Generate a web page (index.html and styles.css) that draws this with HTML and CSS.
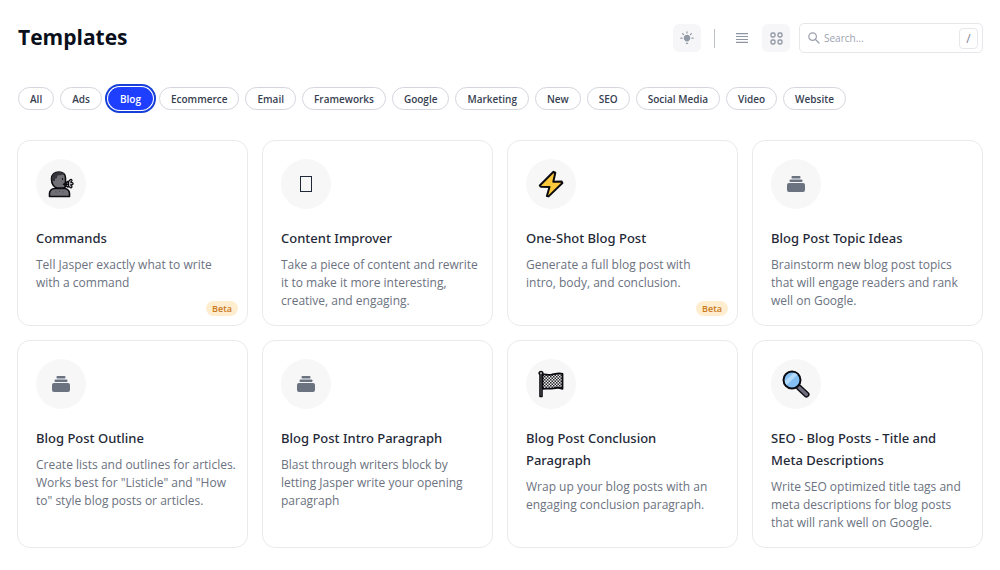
FILE: index.html
```html
<!DOCTYPE html>
<html lang="en">
<head>
<meta charset="utf-8">
<meta name="viewport" content="width=device-width, initial-scale=1">
<title>Templates</title>
<link rel="stylesheet" href="styles.css">
</head>
<body>
<svg class="defs" width="0" height="0" aria-hidden="true">
  <defs>
    <symbol id="stack" viewBox="0 0 18 16">
      <rect x="4.500" y="0" width="9" height="2.400" rx="1"/>
      <rect x="2.500" y="3.500" width="13" height="2.400" rx="1"/>
      <rect x="0" y="7" width="18" height="9" rx="2"/>
    </symbol>
  </defs>
</svg>
<main class="page">
  <header class="topbar">
    <h1 class="title">Templates</h1>
    <div class="tools">
      <button class="tool tool-active" type="button" aria-label="Suggestions">
        <svg width="14" height="14" viewBox="0 0 14 14" fill="none" stroke="#9299a6" stroke-width="1.200" stroke-linecap="round">
          <path d="M7 .8v1.200M2.600 2.600l.9.9M11.400 2.600l-.9.900M.8 7.200H2M12 7.200h1.200"/>
          <path d="M7 4.400a2.700 2.700 0 0 0-1.600 4.900l.8.700h1.600l.8-.7A2.700 2.700 0 0 0 7 4.400zM6.400 12.400h1.200" fill="#9299a6"/>
        </svg>
      </button>
      <span class="divider"></span>
      <button class="tool" type="button" aria-label="List view">
        <svg width="12" height="10" viewBox="0 0 12 10" stroke="#8f96a3" stroke-width="1.200"><path d="M0 .6h12M0 3.500h12M0 6.500h12M0 9.400h12"/></svg>
      </button>
      <button class="tool tool-active tool-grid" type="button" aria-label="Grid view">
        <svg width="13" height="13" viewBox="0 0 13 13" fill="none" stroke="#9299a6" stroke-width="1.400"><rect x="1" y="1" width="4" height="4" rx="1.400"/><rect x="8" y="1" width="4" height="4" rx="1.400"/><rect x="1" y="8" width="4" height="4" rx="1.400"/><rect x="8" y="8" width="4" height="4" rx="1.400"/></svg>
      </button>
      <label class="search">
        <svg width="12" height="12" viewBox="0 0 12 12" fill="none" stroke="#9aa0ac" stroke-width="1.200" stroke-linecap="round"><circle cx="4.600" cy="4.600" r="3.800"/><path d="M7.500 7.500l3.500 3.500"/></svg>
        <input class="search-input" type="text" placeholder="Search..." aria-label="Search">
        <kbd class="key">/</kbd>
      </label>
    </div>
  </header>

  <nav class="filters" aria-label="Categories">
    <button class="chip" type="button">All</button>
    <button class="chip" type="button">Ads</button>
    <button class="chip chip-active" type="button" aria-pressed="true">Blog</button>
    <button class="chip" type="button">Ecommerce</button>
    <button class="chip" type="button">Email</button>
    <button class="chip" type="button">Frameworks</button>
    <button class="chip" type="button">Google</button>
    <button class="chip" type="button">Marketing</button>
    <button class="chip" type="button">New</button>
    <button class="chip" type="button">SEO</button>
    <button class="chip" type="button">Social Media</button>
    <button class="chip" type="button">Video</button>
    <button class="chip" type="button">Website</button>
  </nav>

  <section class="grid">
    <article class="card">
      <div class="icon">
        <svg width="26" height="28" viewBox="0 0 26 28" stroke="#0b0b10" stroke-width="1.600" stroke-linejoin="round" stroke-linecap="round">
          <path d="M1.500 26.500v-3a5 5 0 0 1 5-5h10a5 5 0 0 1 5 5v3z" fill="#717076"/>
          <path d="M3.500 9c0-4.500 3-7 7.500-7 4 0 6.500 2.500 6.500 6v7.500c0 1.800-1 2.500-2.500 2.500H10C6 18 3.500 14 3.500 9z" fill="#717076"/>
          <path d="M4 12C2.800 6 5.500 2 11 2c3 0 4.800.8 5.800 2.500L9.500 5.500l-.7 2.800-1.800.5v2.200H5.500z" fill="#36353b" stroke="none"/>
          <path d="M17 13.500l3-2M15.500 14.300H20M17 15.300l3 1.700" fill="none"/>
          <path d="M20.500 11.500l2-2c1-.6 2 .8 1.200 1.700l-1 1 1.600.4c1.200.4 1 1.900 0 2l-1.600.2 1 1.200c.8 1-.2 2.300-1.200 1.800l-2-1.500z" fill="#c4c4c8" stroke-width="1.200"/>
          <path d="M14.500 8.500v.8" fill="none" stroke-width="1.200"/>
          <path d="M8 22h.1M11.500 21.500h.1M15 22h.1" fill="none" stroke="#45444a" stroke-width="1"/>
        </svg>
      </div>
      <h2 class="name">Commands</h2>
      <p class="desc">Tell Jasper exactly what to write with a command</p>
      <span class="badge">Beta</span>
    </article>
    <article class="card">
      <div class="icon"><span class="glyph"></span></div>
      <h2 class="name">Content Improver</h2>
      <p class="desc">Take a piece of content and rewrite it to make it more interesting, creative, and engaging.</p>
    </article>
    <article class="card">
      <div class="icon">
        <svg width="26" height="28" viewBox="0 0 26 28"><path d="M15.500 1.800L1.800 15.500l1 1.200 8.700.3-2.600 9 1.700.4L24.400 13l-.8-1.500-8.300.2 2-9z" fill="#fdc93c" stroke="#0b0b10" stroke-width="2" stroke-linejoin="round"/></svg>
      </div>
      <h2 class="name">One-Shot Blog Post</h2>
      <p class="desc">Generate a full blog post with<br>intro, body, and conclusion.</p>
      <span class="badge">Beta</span>
    </article>
    <article class="card">
      <div class="icon"><svg class="stack" width="18" height="16"><use href="#stack"/></svg></div>
      <h2 class="name">Blog Post Topic Ideas</h2>
      <p class="desc">Brainstorm new blog post topics that will engage readers and rank well on Google.</p>
    </article>
    <article class="card">
      <div class="icon"><svg class="stack" width="18" height="16"><use href="#stack"/></svg></div>
      <h2 class="name">Blog Post Outline</h2>
      <p class="desc">Create lists and outlines for articles. Works best for "Listicle" and "How to" style blog posts or articles.</p>
    </article>
    <article class="card">
      <div class="icon"><svg class="stack" width="18" height="16"><use href="#stack"/></svg></div>
      <h2 class="name">Blog Post Intro Paragraph</h2>
      <p class="desc">Blast through writers block by letting Jasper write your opening paragraph</p>
    </article>
    <article class="card">
      <div class="icon">
        <svg width="26" height="28" viewBox="0 0 26 28">
          <defs><pattern id="checks" width="3" height="3" patternUnits="userSpaceOnUse"><rect width="3" height="3" fill="#eee"/><path d="M0 0h1.500v1.500H0zM1.500 1.500H3V3H1.500z" fill="#26262c"/></pattern></defs>
          <path d="M4.500 4.500c3-.8 5 .8 9 .2 4-.8 7-2.200 11-.9v15c-3-1.300-6-1.300-9-.5-4 .8-7 0-11 .5z" fill="url(#checks)" stroke="#0b0b10" stroke-width="1.800" stroke-linejoin="round"/>
          <path d="M2 26.500V4.500c-1.500-1-1-3 1-3s2.500 2 1 3v22z" fill="#d0d0d4" stroke="#0b0b10" stroke-width="1.600" stroke-linejoin="round"/>
        </svg>
      </div>
      <h2 class="name">Blog Post Conclusion Paragraph</h2>
      <p class="desc">Wrap up your blog posts with an engaging conclusion paragraph.</p>
    </article>
    <article class="card">
      <div class="icon">
        <svg width="28" height="28" viewBox="0 0 28 28" stroke-linecap="round">
          <path d="M17 17.500l7.500 7" stroke="#0b0b10" stroke-width="6"/>
          <path d="M17 17.500l7.500 7" stroke="#6f6f80" stroke-width="3.200"/>
          <circle cx="10" cy="10" r="8.500" fill="#84bff4" stroke="#0b0b10" stroke-width="2"/>
          <path d="M2.800 11L12 2.800a7.500 7.500 0 0 1 3.500 2L4.500 15a7.500 7.500 0 0 1-1.700-4z" fill="#b3daf9"/>
        </svg>
      </div>
      <h2 class="name">SEO - Blog Posts - Title and Meta Descriptions</h2>
      <p class="desc">Write SEO optimized title tags and meta descriptions for blog posts that will rank well on Google.</p>
    </article>
  </section>
</main>
</body>
</html>
```
FILE: styles.css
```css
* { box-sizing: border-box; }
body {
  margin: 0;
  background: #fff;
  color: #1f2937;
  font-family: "Open Sans", "Noto Sans", sans-serif;
}
button, input, kbd { font-family: inherit; }
.defs { position: absolute; }
.page { padding: 22px 17px; }
.topbar {
  display: flex;
  align-items: flex-start;
  justify-content: space-between;
  padding-left: 1px;
}
.title {
  margin: 0;
  color: #0a0f1c;
  font-size: 21px;
  line-height: 30px;
  font-weight: 700;
}
.tools {
  display: flex;
  align-items: center;
  height: 32px;
}
.tool {
  display: grid;
  place-items: center;
  width: 28px;
  height: 28px;
  padding: 0;
  border: 0;
  border-radius: 6px;
  background: transparent;
}
.tool-active { background: #f6f6f8; }
.tool-grid { margin: 0 9px 0 6px; }
.divider {
  width: 1px;
  height: 19px;
  margin: 0 13px;
  background: #bcc0c8;
}
.search {
  display: flex;
  align-items: center;
  gap: 4px;
  width: 184px;
  height: 30px;
  padding: 0 4px 0 8px;
  border: 1px solid #e5e7eb;
  border-radius: 5px;
}
.search-input {
  flex: 1;
  min-width: 0;
  padding: 0;
  border: 0;
  outline: 0;
  background: transparent;
  font-size: 10px;
}
.search-input::placeholder { color: #9ca3af; opacity: 1; }
.key {
  width: 19px;
  height: 21px;
  border: 1px solid #e5e7eb;
  border-radius: 4px;
  color: #7b8290;
  font-size: 12px;
  line-height: 19px;
  text-align: center;
}
.filters {
  display: flex;
  flex-wrap: wrap;
  gap: 6px;
  margin-top: 33px;
  padding-left: 1px;
}
.chip {
  height: 23px;
  padding: 0 11px;
  border: 1px solid #d3d6dc;
  border-radius: 12px;
  background: #fff;
  color: #374151;
  font-size: 10px;
  line-height: 20px;
  font-weight: 600;
}
.chip-active {
  border-color: #1f3fff;
  background: #1f3fff;
  color: #fff;
  box-shadow: 0 0 0 1px #fff, 0 0 0 3px #1740d8;
}
.grid {
  display: grid;
  grid-template-columns: repeat(4, 1fr);
  gap: 14px;
  margin-top: 30px;
}
.card {
  position: relative;
  padding: 18px 10px 15px 18px;
  border: 1px solid #e9eaec;
  border-radius: 13px;
}
.icon {
  display: grid;
  place-items: center;
  width: 50px;
  height: 50px;
  border-radius: 50%;
  background: #f7f7f8;
}
.stack { fill: #6b7280; }
.glyph {
  width: 12px;
  height: 16px;
  border: 1px solid #1f2937;
}
.name {
  margin: 18px 0 7px;
  padding-right: 8px;
  color: #1f2937;
  font-family: "Noto Sans", "Open Sans", sans-serif;
  font-size: 13px;
  line-height: 22px;
  font-weight: 500;
}
.desc {
  margin: 0;
  color: #6b7280;
  font-size: 12px;
  line-height: 18px;
}
.badge {
  position: absolute;
  right: 9px;
  bottom: 9px;
  padding: 0 6px;
  border-radius: 8px;
  background: #ffedd0;
  color: #c97a1e;
  font-size: 9px;
  line-height: 15px;
  font-weight: 600;
}
```
